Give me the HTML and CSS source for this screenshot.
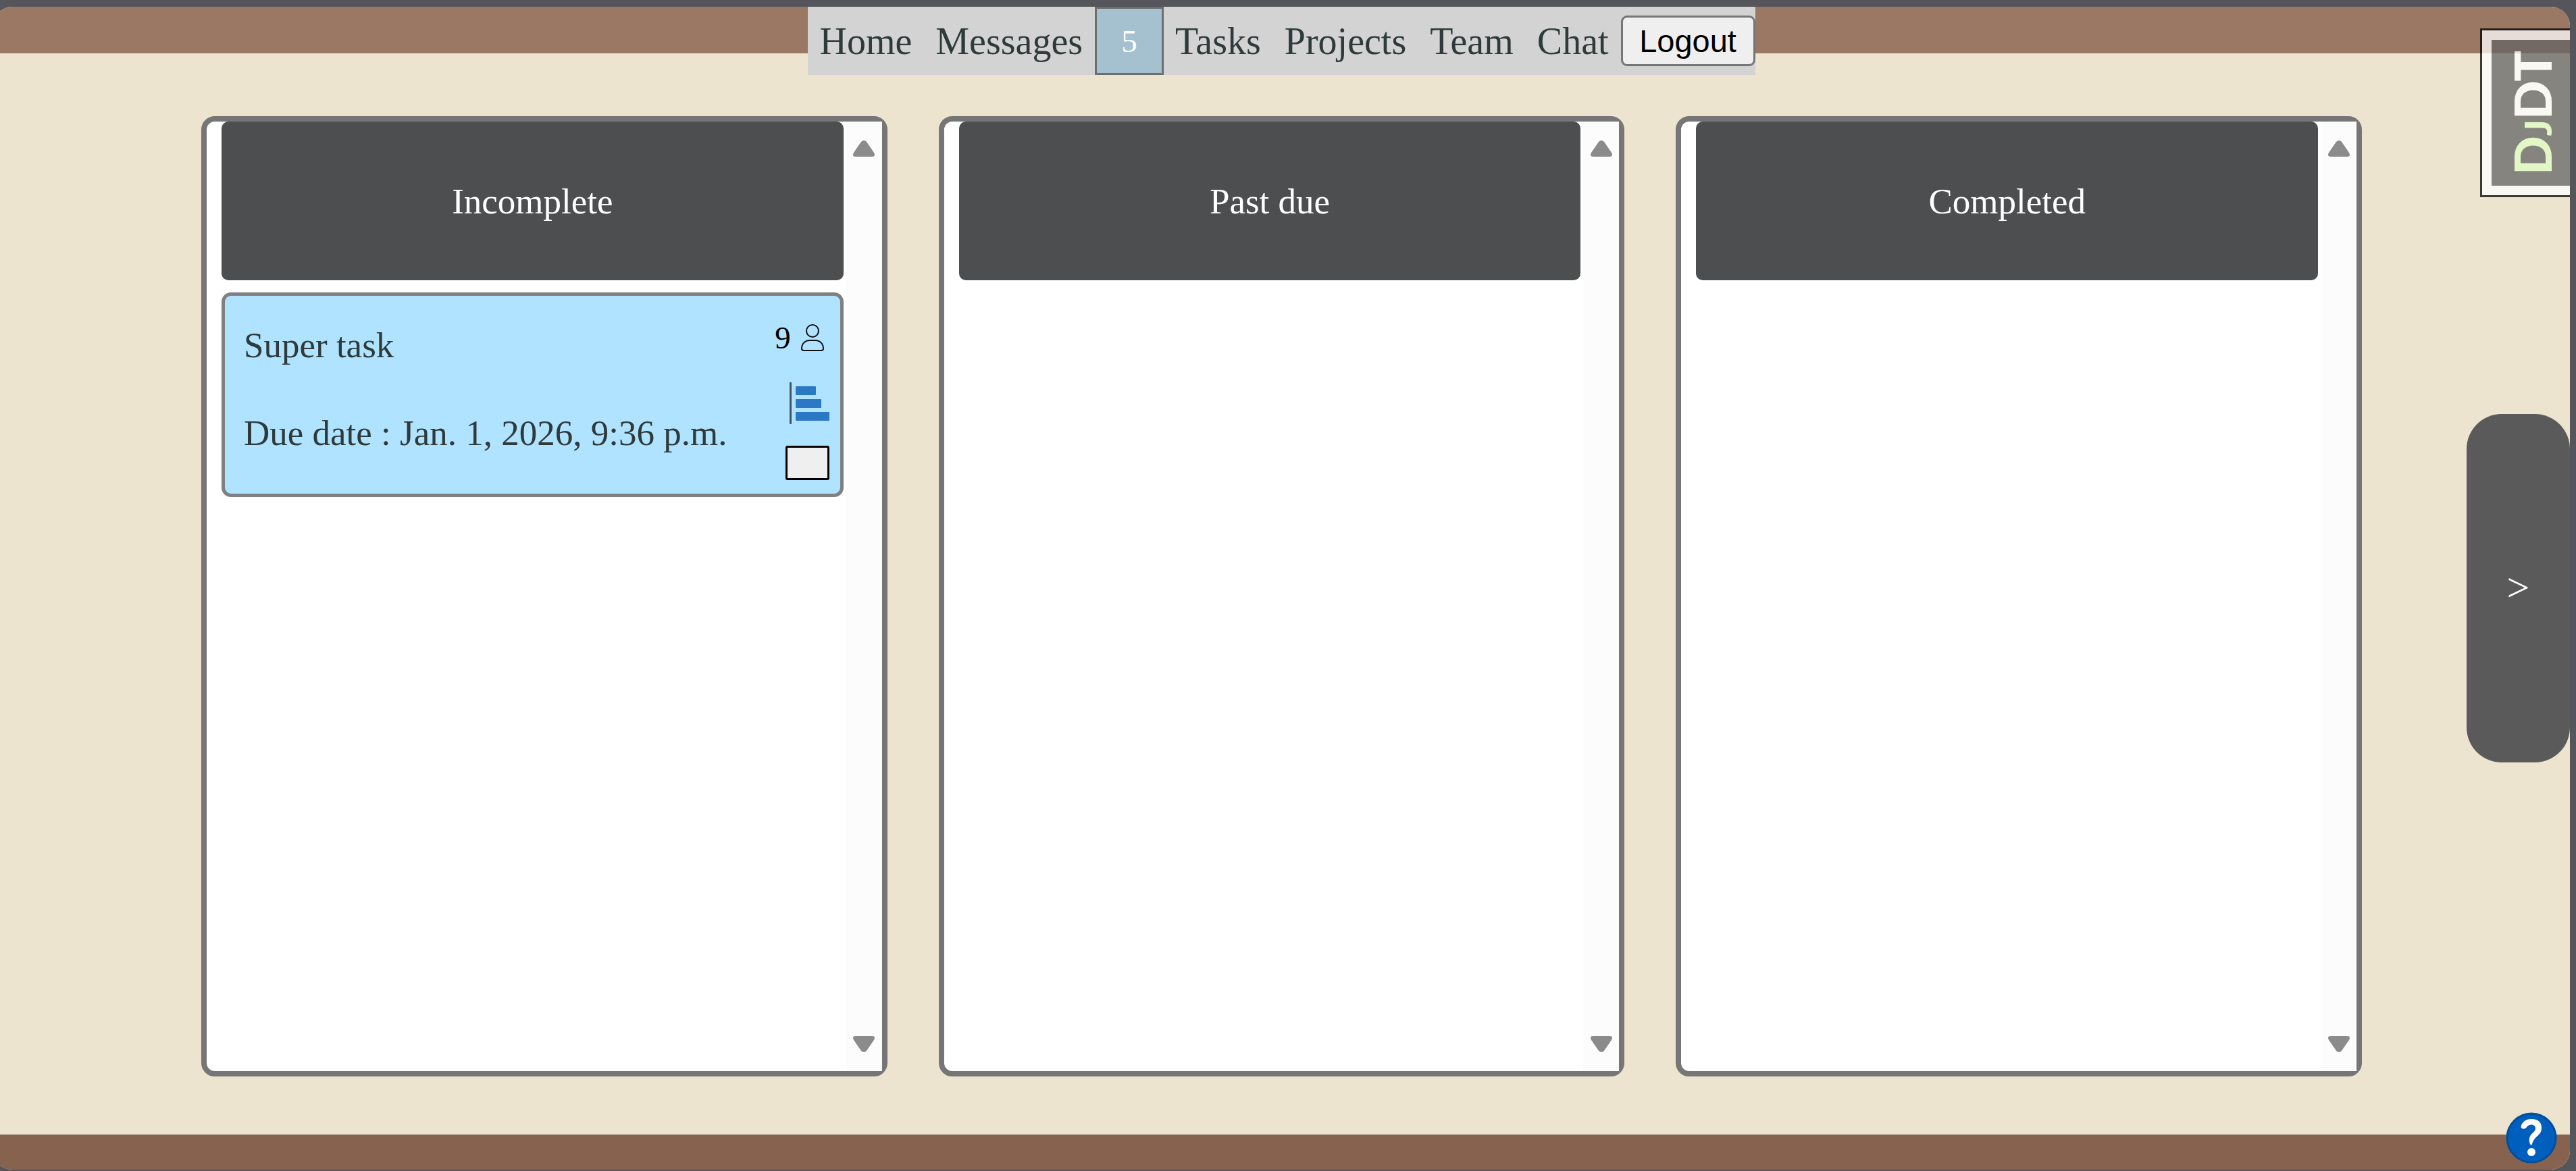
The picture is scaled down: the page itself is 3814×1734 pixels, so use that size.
FILE: index.html
```html
<!DOCTYPE html>
<html lang="en">
<head>
<meta charset="utf-8">
<title>Tasks</title>
<link rel="stylesheet" href="styles.css">
</head>
<body>
<svg class="symbols" aria-hidden="true">
  <symbol id="arrow-up" viewBox="0 0 32 24"><path d="M12 2Q16-2 20 2L31 18Q34 24 28 24H4Q-2 24 1 18Z"/></symbol>
  <symbol id="arrow-down" viewBox="0 0 32 24"><path d="M12 22Q16 26 20 22L31 6Q34 0 28 0H4Q-2 0 1 6Z"/></symbol>
</svg>
<div class="page">
  <header class="header">
    <nav class="nav">
      <a href="#">Home</a>
      <a href="#">Messages</a>
      <button class="count" type="button">5</button>
      <a href="#">Tasks</a>
      <a href="#">Projects</a>
      <a href="#">Team</a>
      <a href="#">Chat</a>
      <button class="logout" type="button">Logout</button>
    </nav>
  </header>

  <main class="board">
    <section class="column">
      <div class="column-body">
        <h2 class="column-title">Incomplete</h2>
        <article class="task">
          <div class="task-text">
            <p>Super task</p>
            <p>Due date : Jan. 1, 2026, 9:36 p.m.</p>
          </div>
          <div class="task-side">
            <div class="members">
              <span>9</span>
              <svg class="person" viewBox="0 0 34 40" aria-hidden="true">
                <circle cx="17" cy="10" r="9"/>
                <path d="M13 24H21C28 24 33 29 33 36Q33 39 30 39H4Q1 39 1 36C1 29 6 24 13 24Z"/>
              </svg>
            </div>
            <svg class="chart" viewBox="0 0 59 62" aria-hidden="true">
              <rect class="axis" x="0" y="0" width="3" height="62" rx="1"/>
              <rect x="9" y="6" width="30" height="13" rx="1"/>
              <rect x="9" y="25" width="38" height="13" rx="1"/>
              <rect x="9" y="44" width="50" height="13" rx="1"/>
            </svg>
            <button class="done" type="button" aria-label="Mark as done"></button>
          </div>
        </article>
      </div>
      <div class="scrollbar" aria-hidden="true">
        <svg><use href="#arrow-up"/></svg>
        <svg><use href="#arrow-down"/></svg>
      </div>
    </section>

    <section class="column">
      <div class="column-body">
        <h2 class="column-title">Past due</h2>
      </div>
      <div class="scrollbar" aria-hidden="true">
        <svg><use href="#arrow-up"/></svg>
        <svg><use href="#arrow-down"/></svg>
      </div>
    </section>

    <section class="column">
      <div class="column-body">
        <h2 class="column-title">Completed</h2>
      </div>
      <div class="scrollbar" aria-hidden="true">
        <svg><use href="#arrow-up"/></svg>
        <svg><use href="#arrow-down"/></svg>
      </div>
    </section>
  </main>

  <footer class="footer"></footer>

  <button class="drawer" type="button">&gt;</button>

  <div class="debug">
    <div class="debug-label"><span>D</span><span class="small">J</span>DT</div>
  </div>

  <button class="help" type="button" aria-label="Help">
    <svg viewBox="0 0 76 76" aria-hidden="true">
      <circle class="disc" cx="38" cy="38" r="36"/>
      <path d="M23 19C26 13 31 10 38 10C48 10 53 15 53 23C53 35 43 34 39 47Q38 50 36 47C31 32 44 31 44 24C44 17 34 17 31 22C27 27 21 24 23 19Z"/>
      <circle cx="38" cy="59" r="6"/>
    </svg>
  </button>
</div>
</body>
</html>
```
FILE: styles.css
```css
* {
  box-sizing: border-box;
}

body {
  margin: 0;
  padding: 10px 9px 2px 0;
  background: #55565b;
  font-family: "Liberation Serif", "Times New Roman", serif;
}

h2,
p {
  margin: 0;
  font-weight: normal;
}

button {
  margin: 0;
  padding: 0;
  font: inherit;
}

svg {
  display: block;
}

.symbols {
  position: absolute;
  width: 0;
  height: 0;
}

/* The page runs under the left edge of the window, hiding its left corners. */
.page {
  position: relative;
  display: flex;
  flex-direction: column;
  min-height: calc(100vh - 12px);
  margin-left: -10px;
  border-radius: 28px;
  background: #ece4cf;
  overflow: hidden;
}

.header {
  display: flex;
  justify-content: center;
  align-items: flex-start;
  height: 69px;
  background: #9a7864;
}

.nav {
  display: flex;
  align-items: center;
  height: 101px;
  background: #d3d3d3;
  font-size: 56px;
  line-height: 64px;
}

.nav a {
  padding: 0 18px 0 17px;
  color: #2f3a3a;
  text-decoration: none;
}

.count {
  width: 102px;
  height: 101px;
  border: 3px solid #6e6e6e;
  background: #a5c0cf;
  color: #fff;
  font-size: 47px;
}

.logout {
  width: 199px;
  height: 75px;
  border: 3px solid #767676;
  border-radius: 9px;
  background: #efefef;
  color: #000;
  font-family: "Liberation Sans", Arial, sans-serif;
  font-size: 47px;
}

.board {
  flex: 1;
  display: grid;
  grid-template-columns: repeat(3, 1fr);
  gap: 76px;
  padding: 93px 308px 86px;
}

.column {
  display: flex;
  border: 8px solid #767676;
  border-radius: 20px;
  background: #fff;
}

.column-body {
  flex: 1;
  display: flex;
  flex-direction: column;
  gap: 18px;
  padding: 0 4px 0 22px;
}

.column-title {
  display: flex;
  align-items: center;
  justify-content: center;
  height: 235px;
  border-radius: 10px;
  background: #4d4e50;
  color: #fff;
  font-size: 53px;
  line-height: 60px;
}

.scrollbar {
  display: flex;
  flex-direction: column;
  justify-content: space-between;
  align-items: center;
  width: 53px;
  padding: 28px 0;
  background: #fcfcfc;
  fill: #8b8b8b;
}

.scrollbar svg {
  width: 32px;
  height: 24px;
}

.task {
  display: flex;
  justify-content: space-between;
  padding: 42px 16px 20px 28px;
  border: 5px solid #808080;
  border-radius: 14px;
  background: #b0e3ff;
}

.task-text {
  display: flex;
  flex-direction: column;
  gap: 68px;
  color: #2f3a3a;
  font-size: 53px;
  line-height: 62px;
}

.task-side {
  display: flex;
  flex-direction: column;
  align-items: flex-end;
}

.members {
  display: flex;
  gap: 15px;
  padding-right: 8px;
  font-size: 47px;
  line-height: 40px;
}

.person {
  width: 34px;
  height: 40px;
  fill: none;
  stroke: #111;
  stroke-width: 2;
}

.chart {
  width: 59px;
  height: 62px;
  margin: 46px 0 32px;
  fill: #2b78c5;
}

.axis {
  fill: #44515f;
}

.done {
  width: 65px;
  height: 51px;
  border: 3px solid #000;
  border-radius: 3px;
  background: #efefef;
}

.footer {
  height: 52px;
  background: #87634f;
}

.drawer {
  position: absolute;
  top: 35%;
  right: 0;
  width: 153px;
  height: 30%;
  border: 0;
  border-radius: 52px;
  background: #5a5a5a;
  color: #fff;
  font-size: 60px;
}

.debug {
  position: absolute;
  top: 32px;
  right: 0;
  width: 133px;
  height: 250px;
  padding: 14px 0 14px 14px;
  border: 3px solid #000;
  border-right: 0;
  background: #fff;
  opacity: 0.75;
}

.debug-label {
  width: 100%;
  height: 100%;
  background: #656565;
  color: #fff;
  font-family: Lato, "Open Sans", sans-serif;
  font-size: 76px;
  font-weight: 900;
  line-height: 120px;
  text-align: center;
  text-orientation: sideways;
  writing-mode: vertical-rl;
  transform: rotate(180deg);
}

.debug-label span {
  color: #e0fec3;
}

.debug-label .small {
  font-size: 56px;
  line-height: 1;
}

.help {
  position: absolute;
  right: 19px;
  bottom: 9px;
  width: 76px;
  height: 76px;
  border: 0;
  background: none;
}

.help svg {
  width: 76px;
  height: 76px;
  fill: #fff;
}

.help .disc {
  fill: #005ebd;
  stroke: #004e9c;
  stroke-width: 3;
}
```
